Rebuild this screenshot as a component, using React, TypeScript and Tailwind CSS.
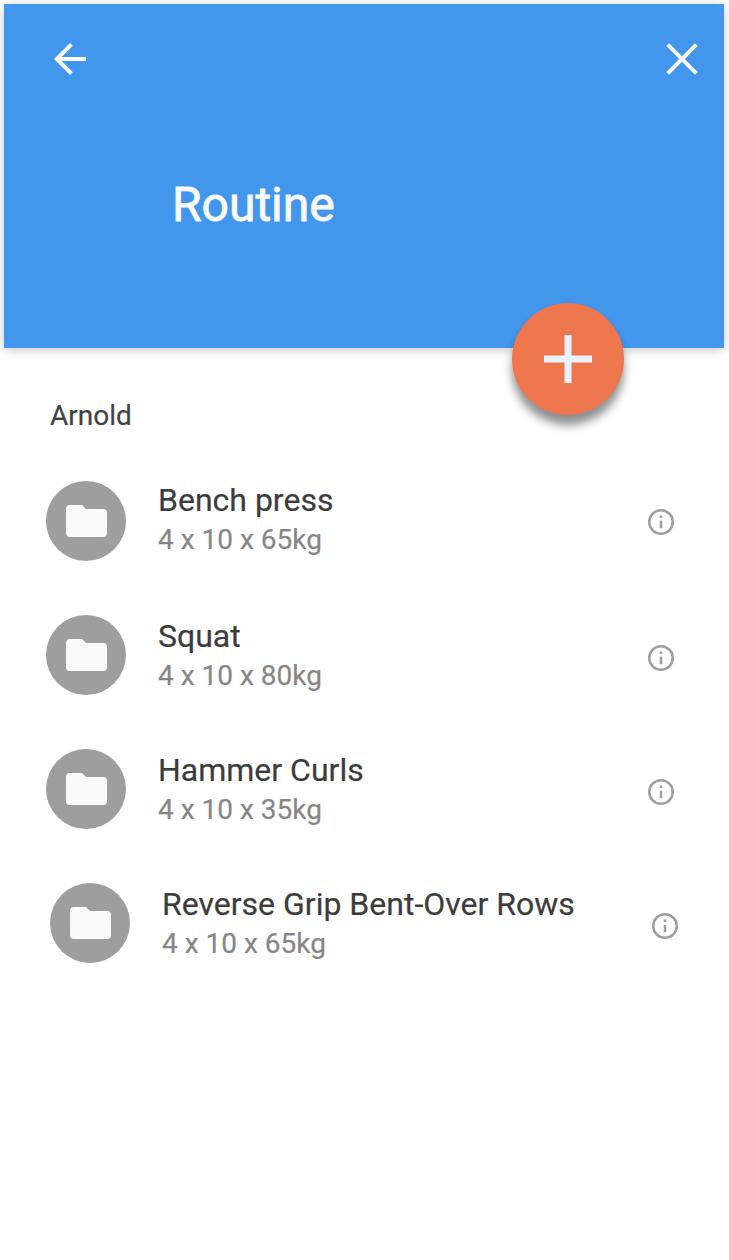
import React from 'react';

const items = [
  { name: 'Bench press', detail: '4 x 10 x 65kg', row: 'h-[134px] pl-[46px] pr-[55px]', text: 'pt-0', info: 'mt-[28px]' },
  { name: 'Squat', detail: '4 x 10 x 80kg', row: 'h-[134px] pl-[46px] pr-[55px]', text: 'pt-[2px]', info: 'mt-[30px]' },
  { name: 'Hammer Curls', detail: '4 x 10 x 35kg', row: 'h-[134px] pl-[46px] pr-[55px]', text: 'pt-[2px]', info: 'mt-[30px]' },
  { name: 'Reverse Grip Bent-Over Rows', detail: '4 x 10 x 65kg', row: 'h-[134px] pl-[50px] pr-[51px]', text: 'pt-[2px]', info: 'mt-[30px]' },
];

export default function App() {
  return (
    <main className="h-[1260px] w-[729px] overflow-hidden bg-white pl-1 pt-1 font-['Roboto',sans-serif]">
      <header className="relative h-[344px] w-[720px] bg-[#4296ec] shadow-[0_2px_10px_rgba(0,0,0,0.22)]">
        <div className="flex justify-between pl-[42px] pr-[18px] pt-[31px]">
          <button aria-label="Back">
            <svg className="size-12" viewBox="0 0 24 24" fill="#fafafa"><path d="M20 11H7.83l5.59-5.59L12 4l-8 8 8 8 1.41-1.41L7.83 13H20v-2z" /></svg>
          </button>
          <button aria-label="Close">
            <svg className="size-12" viewBox="0 0 48 48" fill="none" stroke="#fafafa" strokeWidth="4"><path d="m9.7 9.7 28.6 28.6m0-28.6L9.7 38.3" /></svg>
          </button>
        </div>
        <h1 className="pl-[168px] pt-[90px] text-[48px] font-normal leading-[64px] text-[#fafafa] [-webkit-text-stroke:0.8px_#fafafa]">Routine</h1>
        <button aria-label="Add exercise" className="absolute left-[508px] top-[299px] flex size-28 items-center justify-center rounded-full bg-[#ef774e] shadow-[0_10px_10px_rgba(0,0,0,0.44)]">
          <svg className="size-12" viewBox="0 0 48 48" fill="none" stroke="#e6f2fc" strokeWidth="7"><path d="M24 0v48M0 24h48" /></svg>
        </button>
      </header>
      <section className="-ml-1">
        <h2 className="h-[133px] pl-[50px] pt-[52px] text-[28px] leading-8 text-[#424242] [-webkit-text-stroke:0.2px_#424242]">Arnold</h2>
        <ul>
          {items.map((item) => (
            <li key={item.name} className={`flex items-start ${item.row}`}>
              <div className="flex size-20 shrink-0 items-center justify-center rounded-full bg-[#9e9e9e]">
                <svg className="ml-px h-8 w-[41px]" viewBox="0 0 41 32" fill="#fafafa"><path d="M4 0h12l4 4h17a4 4 0 0 1 4 4v20a4 4 0 0 1-4 4H4a4 4 0 0 1-4-4V4a4 4 0 0 1 4-4Z" /></svg>
              </div>
              <div className={`ml-8 grow ${item.text}`}>
                <h3 className="text-[32px] leading-[38px] text-[#3c3c3c] [-webkit-text-stroke:0.2px_#3c3c3c]">{item.name}</h3>
                <p className="pt-px text-[28px] leading-10 text-[#868686] [-webkit-text-stroke:0.2px_#868686]">{item.detail}</p>
              </div>
              <svg className={`size-[26px] shrink-0 ${item.info}`} viewBox="0 0 26 26" fill="none" stroke="#9e9e9e" strokeWidth="2.5"><circle cx="13" cy="13" r="11.75" /><path d="M13 11.8v7.5M13 6.5v2.4" /></svg>
            </li>
          ))}
        </ul>
      </section>
    </main>
  );
}
